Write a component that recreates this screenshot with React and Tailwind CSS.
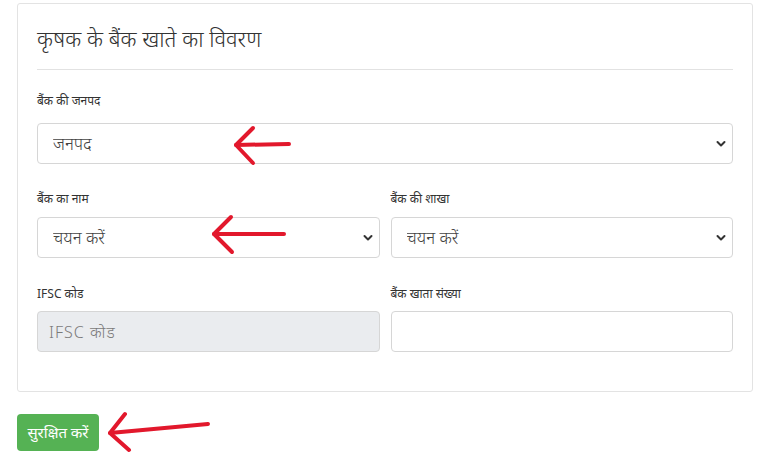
import { useState } from 'react';

const fontStack = '"Noto Sans", "Noto Sans Devanagari", "Lohit Devanagari", "Liberation Sans", sans-serif';

function Chevron() {
  return (
    <svg
      className="pointer-events-none absolute right-[7px] top-1/2 -translate-y-1/2"
      width="10"
      height="7"
      viewBox="0 0 10 7"
    >
      <path d="M1.5 1.5 L5 5 L8.5 1.5" fill="none" stroke="#333" strokeWidth="2" strokeLinecap="round" strokeLinejoin="round" />
    </svg>
  );
}

function SelectBox({ value, onChange, options, placeholder }) {
  return (
    <div className="relative">
      <select
        value={value}
        onChange={onChange}
        className="block h-[41px] w-full appearance-none rounded-[4px] border border-[#d6d6d6] bg-white pl-[15px] pr-8 text-[17px] font-light text-[#444] outline-none"
      >
        <option value="">{placeholder}</option>
        {options.map((o) => (
          <option key={o} value={o}>{o}</option>
        ))}
      </select>
      <Chevron />
    </div>
  );
}

function Label({ children, className = '' }) {
  return <label className={`block text-[12px] leading-[17px] text-[#333] ${className}`}>{children}</label>;
}

export default function App() {
  const [form, setForm] = useState({ district: '', bank: '', branch: '', account: '' });

  return (
    <div className="relative h-[464px] w-[761px] overflow-hidden bg-white" style={{ fontFamily: fontStack }}>
      <div className="ml-[17px] mt-[3px] w-[736px] rounded-[3px] border border-[#e3e3e3] px-[19px] pb-[39px] pt-[18px]">
        {/* Header */}
        <h3 className="text-[22px] font-light leading-[32px] text-[#333]">कृषक के बैंक खाते का विवरण</h3>
        <hr className="mt-[15px] border-t border-[#e2e2e2]" />

        <div className="mt-[22px]">
          <Label className="mb-[14px]">बैंक की जनपद</Label>
          <SelectBox
            value={form.district}
            onChange={(e) => setForm({ ...form, district: e.target.value })}
            options={['लखनऊ', 'कानपुर नगर', 'वाराणसी']}
            placeholder="जनपद"
          />
        </div>

        <div className="mt-[26px] grid grid-cols-2 gap-x-[11px]">
          <div>
            <Label className="mb-[10px]">बैंक का नाम</Label>
            <SelectBox
              value={form.bank}
              onChange={(e) => setForm({ ...form, bank: e.target.value })}
              options={['भारतीय स्टेट बैंक', 'पंजाब नैशनल बैंक']}
              placeholder="चयन करें"
            />
          </div>
          <div>
            <Label className="mb-[10px]">बैंक की शाखा</Label>
            <SelectBox
              value={form.branch}
              onChange={(e) => setForm({ ...form, branch: e.target.value })}
              options={['मुख्य शाखा']}
              placeholder="चयन करें"
            />
          </div>
        </div>

        <div className="mt-[27px] grid grid-cols-2 gap-x-[11px]">
          <div>
            <Label className="mb-[9px]">IFSC कोड</Label>
            <input
              type="text"
              disabled
              placeholder="IFSC कोड"
              className="block h-[41px] w-full rounded-[4px] border border-[#d6d6d6] bg-[#eaecef] px-[11px] text-[16px] font-light tracking-[1px] text-[#555] placeholder:text-[#7a7a7a] outline-none"
            />
          </div>
          <div>
            <Label className="mb-[9px]">बैंक खाता संख्या</Label>
            <input
              type="text"
              value={form.account}
              onChange={(e) => setForm({ ...form, account: e.target.value })}
              className="block h-[41px] w-full rounded-[4px] border border-[#d6d6d6] bg-white px-[12px] text-[16px] text-[#555] outline-none"
            />
          </div>
        </div>
      </div>

      <button
        type="button"
        className="ml-[17px] mt-[22px] h-[37px] w-[82px] rounded-[4px] bg-[#55b254] text-[15px] text-white"
      >
        सुरक्षित करें
      </button>

      {/* red annotation arrows drawn over the form */}
      <svg className="pointer-events-none absolute left-0 top-0" width="761" height="464" viewBox="0 0 761 464">
        <g fill="none" stroke="#e2182c" strokeWidth="4" strokeLinecap="round" strokeLinejoin="round">
          <path d="M236 145 L289 144" />
          <path d="M253 128 L236 145 L253 163" />
          <path d="M214 234 L284 234" />
          <path d="M231 217 L214 234 L232 252" />
          <path d="M110 433 L208 424" />
          <path d="M125 414 L110 433 L129 450" />
        </g>
      </svg>
    </div>
  );
}
